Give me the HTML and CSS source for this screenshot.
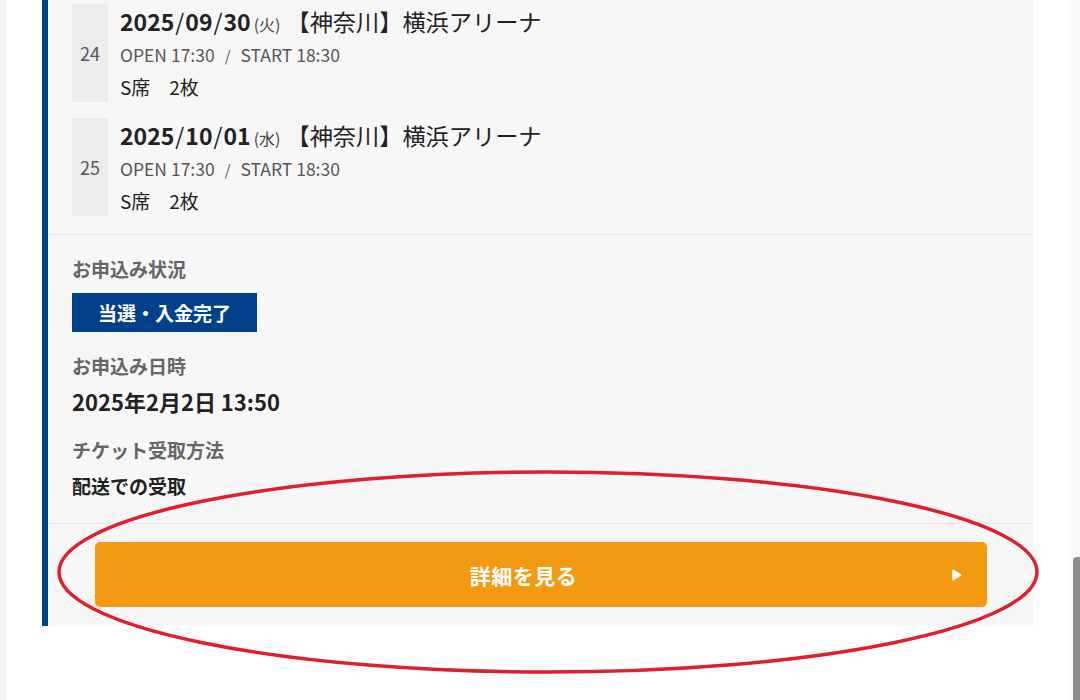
FILE: index.html
```html
<!DOCTYPE html>
<html lang="ja">
<head>
  <meta charset="UTF-8" />
  <meta name="viewport" content="width=device-width, initial-scale=1" />
  <title>お申込み履歴</title>
  <link rel="stylesheet" href="styles.css">
</head>
<body>

  <div class="page">
    <div class="entry">

      <!-- 公演一覧 -->
      <ul class="schedule">
        <li class="show">
          <span class="show-no">24</span>
          <div class="show-info">
            <p class="show-date"><span class="date">2025<span class="sl">/</span>09<span class="sl">/</span>30</span><span class="dow">(火)</span><span class="venue">【神奈川】横浜アリーナ</span></p>
            <p class="show-time">OPEN 17:30<span class="sep">/</span>START 18:30</p>
            <p class="show-seat">S席　2枚</p>
          </div>
        </li>
        <li class="show">
          <span class="show-no">25</span>
          <div class="show-info">
            <p class="show-date"><span class="date">2025<span class="sl">/</span>10<span class="sl">/</span>01</span><span class="dow">(水)</span><span class="venue">【神奈川】横浜アリーナ</span></p>
            <p class="show-time">OPEN 17:30<span class="sep">/</span>START 18:30</p>
            <p class="show-seat">S席　2枚</p>
          </div>
        </li>
      </ul>

      <!-- 申込情報 -->
      <dl class="status">
        <div class="field">
          <dt>お申込み状況</dt>
          <dd><span class="badge">当選・入金完了</span></dd>
        </div>
        <div class="field">
          <dt>お申込み日時</dt>
          <dd class="applied-at">2025年2月2日 13:50</dd>
        </div>
        <div class="field">
          <dt>チケット受取方法</dt>
          <dd class="receive">配送での受取</dd>
        </div>
      </dl>

      <div class="actions">
        <a class="detail-btn" href="#">
          <span class="detail-label">詳細を見る</span>
          <svg class="detail-arrow" width="10" height="12" viewBox="0 0 10 12"><path d="M1 1.2 L9 6 L1 10.8 Z" fill="#fff" stroke="#fff" stroke-width="1.4" stroke-linejoin="round"/></svg>
        </a>
      </div>

    </div>
  </div>

  <!-- 注目マーク -->
  <svg class="mark" width="1080" height="700" viewBox="0 0 1080 700">
    <ellipse cx="548" cy="572" rx="489" ry="100" fill="none" stroke="#e01f2b" stroke-width="3.5"/>
  </svg>

  <div class="scrollbar"><div class="thumb"></div></div>

</body>
</html>
```

FILE: styles.css
```css
body {
  margin: 0;
  background: #fff;
  font-family: "Noto Sans CJK JP", "Noto Sans", sans-serif;
  color: #222;
  overflow: hidden;
}

p, ul, dl, dd {
  margin: 0;
  padding: 0;
}

.page {
  border-left: 6px solid #f3f3f3;
  padding-left: 36px;
  height: 700px;
}

.entry {
  width: 985px;
  background: #f7f7f7;
  border-left: 6px solid #00418a;
}

/* 公演一覧 */
.schedule {
  list-style: none;
  padding: 4px 0 18px 24px;
  display: flex;
  flex-direction: column;
  gap: 16px;
  border-bottom: 1px solid #e8e8e8;
}

.show {
  display: flex;
  gap: 12px;
}

.show-no {
  width: 36px;
  background: #ececec;
  color: #555;
  font-size: 18px;
  display: flex;
  align-items: center;
  justify-content: center;
}

.show-date {
  height: 36px;
  line-height: 41px;
  white-space: nowrap;
}

.show-date span {
  line-height: 1;
}

.date {
  font-size: 23px;
  font-weight: 700;
}

.date .sl {
  font-weight: 400;
  margin: 0 1px;
}

.dow {
  font-size: 16px;
  color: #444;
  margin-left: 3px;
}

.venue {
  font-size: 23.2px;
  margin-left: 6px;
}

.show-time {
  line-height: 30px;
  font-size: 17.5px;
  color: #555;
}

.show-time .sep {
  margin: 0 10px;
  font-size: 15px;
}

.show-seat {
  padding-top: 1px;
  line-height: 30px;
  font-size: 19px;
}

/* 申込情報 */
.status {
  padding: 20px 24px 23px;
  border-bottom: 1px solid #e8e8e8;
}

.field + .field {
  margin-top: 20px;
}

.field dt {
  font-size: 19px;
  font-weight: 700;
  color: #666;
  line-height: 28px;
}

.field dd {
  margin-top: 8px;
}

.badge {
  display: inline-block;
  background: #00418a;
  color: #fff;
  font-size: 19px;
  font-weight: 700;
  line-height: 39px;
  padding: 0 26px;
  margin-top: 2px;
}

.applied-at {
  font-size: 22px;
  font-weight: 700;
  line-height: 30px;
}

.field dd.applied-at {
  margin-top: 6px;
}

.receive {
  font-size: 19px;
  font-weight: 700;
  line-height: 28px;
}

/* 詳細ボタン */
.actions {
  padding: 18px 46px 19px 47px;
}

.detail-btn {
  display: flex;
  align-items: center;
  height: 65px;
  padding-right: 25px;
  background: #f39a12;
  border-radius: 5px;
  color: #fff;
  text-decoration: none;
}

.detail-label {
  flex: 1;
  text-align: center;
  font-size: 21px;
  font-weight: 700;
  letter-spacing: 0.5px;
}

/* 赤丸 */
.mark {
  position: absolute;
  left: 0;
  top: 0;
  pointer-events: none;
}

.scrollbar {
  position: fixed;
  right: 0;
  top: 0;
  width: 12px;
  height: 700px;
  background: #fafafa;
}

.thumb {
  position: absolute;
  right: 0;
  top: 557px;
  width: 7px;
  height: 150px;
  background: #8c8c8c;
  border-radius: 4px 0 0 0;
}
```
